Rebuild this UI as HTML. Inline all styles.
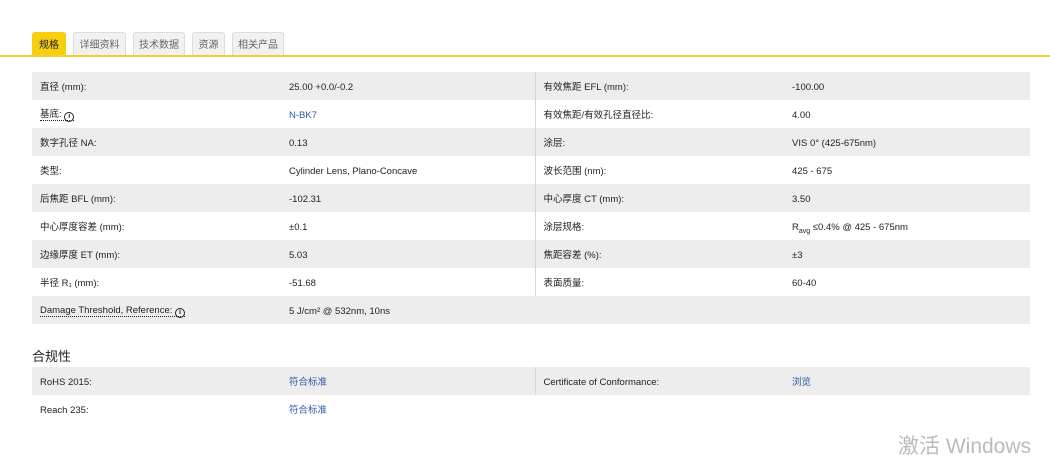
<!DOCTYPE html>
<html><head><meta charset="utf-8"><style>
body{margin:0;width:1050px;height:449px;overflow:hidden;background:#fff;font-family:"Liberation Sans","Noto Sans CJK SC",sans-serif;font-size:9.5px;color:#222;position:relative}
.tab{position:absolute;top:32px;height:23px;line-height:25px;font-size:10px;text-align:center;background:#f1f1f1;border:1px solid #ddd;border-bottom:none;border-radius:3px 3px 0 0;color:#666;box-sizing:border-box}
.tab.a{background:#f7cf0f;border-color:#f7cf0f;color:#222}
.line{position:absolute;left:0;top:55px;width:1050px;height:2px;background:#f2cf2a}
table{position:absolute;left:32px;border-collapse:collapse;width:998px;table-layout:fixed}
td{height:28px;padding:3px 0 0 8px;box-sizing:border-box;vertical-align:middle;white-space:nowrap;line-height:12px}
tr:nth-child(odd) td{background:#ededed}
td.c1{width:249px}td.c2{width:254px}td.c3{width:249px;border-left:1px solid #d6d6d6}
.b{color:#2a5aa6}
.i{display:inline-block;width:8px;height:8px;border:1px solid #222;border-radius:50%;font-size:7px;line-height:8px;text-align:center;font-weight:bold;vertical-align:-1px}
.u{border-bottom:1px dotted #222}
h3{position:absolute;left:32px;top:346px;margin:0;font-size:13px;font-weight:normal;color:#222}
.wm{position:absolute;left:898px;top:430px;font-size:21px;color:#bbb;font-family:"Liberation Sans","Noto Sans CJK SC",sans-serif}
sub{font-size:7px;line-height:0}
</style></head><body>
<div class="tab a" style="left:32px;width:34px">规格</div>
<div class="tab" style="left:73px;width:53px">详细资料</div>
<div class="tab" style="left:133px;width:52px">技术数据</div>
<div class="tab" style="left:192px;width:33px">资源</div>
<div class="tab" style="left:232px;width:52px">相关产品</div>
<div class="line"></div>
<table style="top:72px">
<tr><td class="c1">直径 (mm):</td><td class="c2">25.00 +0.0/-0.2</td><td class="c3">有效焦距 EFL (mm):</td><td>-100.00</td></tr>
<tr><td class="c1"><span class="u">基底: <span class="i">i</span></span></td><td class="c2 b">N-BK7</td><td class="c3">有效焦距/有效孔径直径比:</td><td>4.00</td></tr>
<tr><td class="c1">数字孔径 NA:</td><td class="c2">0.13</td><td class="c3">涂层:</td><td>VIS 0° (425-675nm)</td></tr>
<tr><td class="c1">类型:</td><td class="c2">Cylinder Lens, Plano-Concave</td><td class="c3">波长范围 (nm):</td><td>425 - 675</td></tr>
<tr><td class="c1">后焦距 BFL (mm):</td><td class="c2">-102.31</td><td class="c3">中心厚度 CT (mm):</td><td>3.50</td></tr>
<tr><td class="c1">中心厚度容差 (mm):</td><td class="c2">±0.1</td><td class="c3">涂层规格:</td><td>R<sub>avg</sub> ≤0.4% @ 425 - 675nm</td></tr>
<tr><td class="c1">边缘厚度 ET (mm):</td><td class="c2">5.03</td><td class="c3">焦距容差 (%):</td><td>±3</td></tr>
<tr><td class="c1">半径 R₁ (mm):</td><td class="c2">-51.68</td><td class="c3">表面质量:</td><td>60-40</td></tr>
<tr><td class="c1"><span class="u">Damage Threshold, Reference: <span class="i">i</span></span></td><td class="c2">5 J/cm² @ 532nm, 10ns</td><td class="c3" style="border-left:none"></td><td></td></tr>
</table>
<h3>合规性</h3>
<table style="top:367px">
<tr><td class="c1" style="height:27px">RoHS 2015:</td><td class="c2 b">符合标准</td><td class="c3">Certificate of Conformance:</td><td class="b">浏览</td></tr>
<tr><td class="c1" style="height:27px">Reach 235:</td><td class="c2 b">符合标准</td><td class="c3" style="border-left:none"></td><td></td></tr>
</table>
<div class="wm">激活 Windows</div>
</body></html>
